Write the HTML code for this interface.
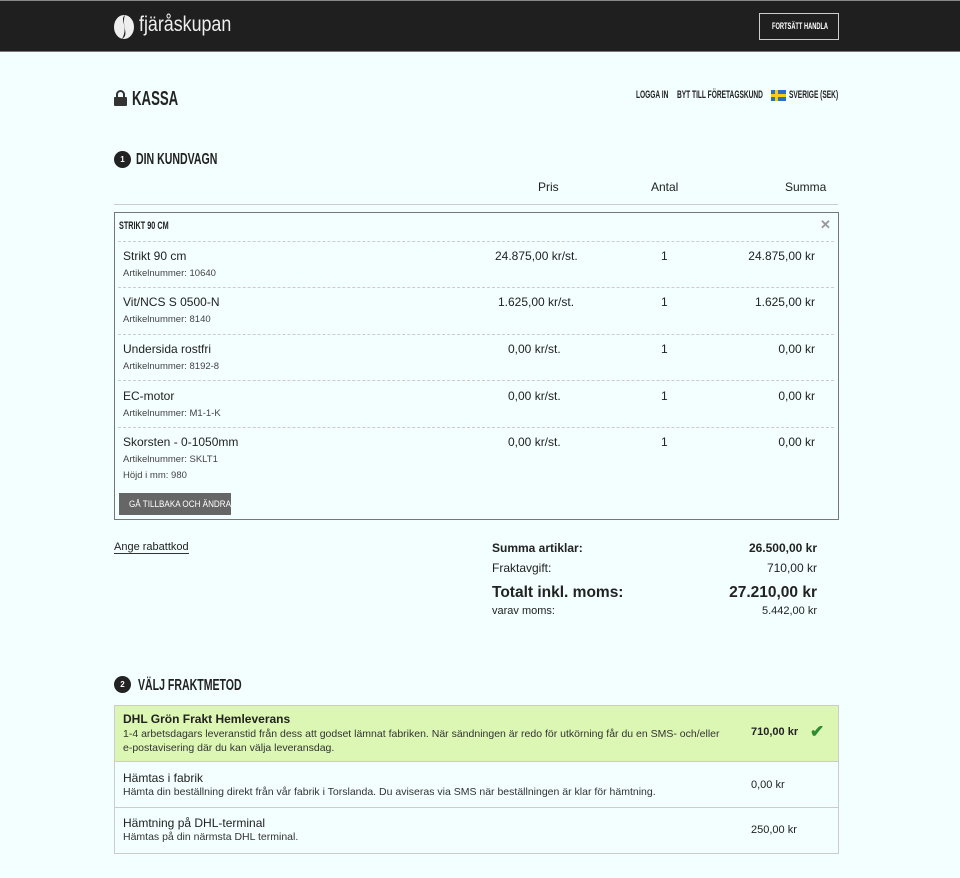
<!DOCTYPE html>
<html><head><meta charset="utf-8"><style>
*{box-sizing:border-box;margin:0;padding:0}
body{width:960px;height:878px;background:#f3fefe;font-family:"Liberation Sans",sans-serif;color:#222;position:relative;overflow:hidden;font-size:11px}
.a{position:absolute}
.hd{left:0;top:0;width:960px;height:52px;background:#1e1f1e;border-top:1px solid #888;border-bottom:1px solid #777}
.cond{font-weight:bold;text-transform:uppercase;white-space:nowrap;transform:scaleX(0.66);transform-origin:left top}
.r{text-align:right}
.sm{font-size:9.5px;color:#444}
.dash{border-top:1px dashed #ccc}
</style></head><body>
<div class="a hd">
 <svg class="a" style="left:113px;top:13px" width="22" height="26" viewBox="0 0 22 26"><ellipse cx="11" cy="13" rx="10" ry="12" fill="#eee"/><path d="M12 1 C6 6 16 12 9 25 C17 20 8 12 12 1Z" fill="#1e1f1e"/></svg>
 <div class="a" style="left:139px;top:12px;font-size:21px;color:#eee;white-space:nowrap;transform:scaleX(0.85);transform-origin:left top">fjäråskupan</div>
 <div class="a" style="left:759px;top:12px;width:80px;height:27px;border:1px solid #ccc"></div>
 <div class="a cond" style="left:772px;top:20px;font-size:9.5px;color:#fff;transform:scaleX(0.6)">Fortsätt handla</div>
</div>
<svg class="a" style="left:114px;top:90px" width="13" height="16" viewBox="0 0 13 16"><path d="M3 7V4.5a3.5 3.5 0 0 1 7 0V7" stroke="#333" stroke-width="2" fill="none"/><rect x="0" y="7" width="13" height="9" rx="1" fill="#333"/></svg>
<div class="a cond" style="left:132px;top:88px;font-size:20px">Kassa</div>
<div class="a cond" style="left:636px;top:89px;font-size:11px;transform:scaleX(0.6)">Logga in</div>
<div class="a cond" style="left:677px;top:89px;font-size:11px;transform:scaleX(0.6)">Byt till företagskund</div>
<svg class="a" style="left:771px;top:90px" width="15" height="11"><rect width="15" height="11" fill="#2a6fc0"/><rect x="4" width="3" height="11" fill="#f5cc1a"/><rect y="4" width="15" height="3" fill="#f5cc1a"/></svg>
<div class="a cond" style="left:789px;top:89px;font-size:11px;transform:scaleX(0.6)">Sverige (SEK)</div>

<div class="a" style="left:114px;top:151px;width:17px;height:17px;border-radius:50%;background:#222;color:#fff;font-size:8px;text-align:center;line-height:17px;font-weight:bold">1</div>
<div class="a cond" style="left:136px;top:151px;font-size:16px">Din kundvagn</div>
<div class="a" style="left:538px;top:180px;font-size:12px">Pris</div>
<div class="a" style="left:651px;top:180px;font-size:12px">Antal</div>
<div class="a" style="left:785px;top:180px;font-size:12px">Summa</div>
<div class="a" style="left:114px;top:204px;width:724px;border-top:1px solid #ccc"></div>
<div class="a" style="left:114px;top:212px;width:725px;height:308px;border:1px solid #777"></div>
<div class="a cond" style="left:119px;top:220px;font-size:11px">Strikt 90 cm</div>
<div class="a" style="left:820px;top:217px;font-size:13px;color:#999;font-weight:bold">✕</div>

<div class="a dash" style="left:118px;top:241px;width:716px"></div>
<div class="a" style="left:123px;top:249px;font-size:12px">Strikt 90 cm</div>
<div class="a sm" style="left:123px;top:268px">Artikelnummer: 10640</div>
<div class="a" style="left:495px;top:249px;font-size:12px">24.875,00 kr/st.</div>
<div class="a" style="left:661px;top:249px;font-size:12px">1</div>
<div class="a r" style="left:700px;width:115px;top:249px;font-size:12px">24.875,00 kr</div>

<div class="a dash" style="left:118px;top:287px;width:716px"></div>
<div class="a" style="left:123px;top:295px;font-size:12px">Vit/NCS S 0500-N</div>
<div class="a sm" style="left:123px;top:314px">Artikelnummer: 8140</div>
<div class="a" style="left:498px;top:295px;font-size:12px">1.625,00 kr/st.</div>
<div class="a" style="left:661px;top:295px;font-size:12px">1</div>
<div class="a r" style="left:700px;width:115px;top:295px;font-size:12px">1.625,00 kr</div>

<div class="a dash" style="left:118px;top:334px;width:716px"></div>
<div class="a" style="left:123px;top:342px;font-size:12px">Undersida rostfri</div>
<div class="a sm" style="left:123px;top:361px">Artikelnummer: 8192-8</div>
<div class="a" style="left:508px;top:342px;font-size:12px">0,00 kr/st.</div>
<div class="a" style="left:661px;top:342px;font-size:12px">1</div>
<div class="a r" style="left:700px;width:115px;top:342px;font-size:12px">0,00 kr</div>

<div class="a dash" style="left:118px;top:380px;width:716px"></div>
<div class="a" style="left:123px;top:389px;font-size:12px">EC-motor</div>
<div class="a sm" style="left:123px;top:408px">Artikelnummer: M1-1-K</div>
<div class="a" style="left:508px;top:389px;font-size:12px">0,00 kr/st.</div>
<div class="a" style="left:661px;top:389px;font-size:12px">1</div>
<div class="a r" style="left:700px;width:115px;top:389px;font-size:12px">0,00 kr</div>

<div class="a dash" style="left:118px;top:427px;width:716px"></div>
<div class="a" style="left:123px;top:435px;font-size:12px">Skorsten - 0-1050mm</div>
<div class="a sm" style="left:123px;top:454px">Artikelnummer: SKLT1</div>
<div class="a sm" style="left:123px;top:470px">Höjd i mm: 980</div>
<div class="a" style="left:508px;top:435px;font-size:12px">0,00 kr/st.</div>
<div class="a" style="left:661px;top:435px;font-size:12px">1</div>
<div class="a r" style="left:700px;width:115px;top:435px;font-size:12px">0,00 kr</div>
<div class="a" style="left:119px;top:493px;width:112px;height:22px;background:#666"></div>
<div class="a" style="left:129px;top:499px;font-size:9px;color:#fff;white-space:nowrap;transform:scaleX(0.9);transform-origin:left top">GÅ TILLBAKA OCH ÄNDRA</div>

<div class="a" style="left:114px;top:541px;font-size:11px;border-bottom:1px solid #333">Ange rabattkod</div>
<div class="a" style="left:492px;top:541px;font-size:12px;font-weight:bold">Summa artiklar:</div>
<div class="a r" style="left:700px;width:117px;top:541px;font-size:12px;font-weight:bold">26.500,00 kr</div>
<div class="a" style="left:492px;top:561px;font-size:12px">Fraktavgift:</div>
<div class="a r" style="left:700px;width:117px;top:561px;font-size:12px">710,00 kr</div>
<div class="a" style="left:492px;top:584px;font-size:15.5px;font-weight:bold">Totalt inkl. moms:</div>
<div class="a r" style="left:680px;width:137px;top:584px;font-size:15.5px;font-weight:bold">27.210,00 kr</div>
<div class="a" style="left:492px;top:605px;font-size:11px">varav moms:</div>
<div class="a r" style="left:700px;width:117px;top:605px;font-size:11px">5.442,00 kr</div>

<div class="a" style="left:114px;top:676px;width:17px;height:17px;border-radius:50%;background:#222;color:#fff;font-size:8px;text-align:center;line-height:17px;font-weight:bold">2</div>
<div class="a cond" style="left:138px;top:677px;font-size:16px">Välj fraktmetod</div>

<div class="a" style="left:114px;top:705px;width:725px;height:149px;border:1px solid #ccc"></div>
<div class="a" style="left:115px;top:706px;width:723px;height:56px;background:#dcf6b4;border-bottom:1px solid #ccc"></div>
<div class="a" style="left:123px;top:712px;font-size:12px;font-weight:bold">DHL Grön Frakt Hemleverans</div>
<div class="a" style="left:123px;top:727px;font-size:10.5px;line-height:14px;width:600px;color:#333">1-4 arbetsdagars leveranstid från dess att godset lämnat fabriken. När sändningen är redo för utkörning får du en SMS- och/eller e-postavisering där du kan välja leveransdag.</div>
<div class="a" style="left:751px;top:726px;font-size:11px;font-weight:bold">710,00 kr</div>
<div class="a" style="left:810px;top:722px;font-size:17px;color:#2e8b2e;font-weight:bold">✔</div>
<div class="a" style="left:115px;top:807px;width:723px;border-top:1px solid #ccc"></div>
<div class="a" style="left:123px;top:771px;font-size:12px">Hämtas i fabrik</div>
<div class="a" style="left:123px;top:786px;font-size:10.5px;color:#333">Hämta din beställning direkt från vår fabrik i Torslanda. Du aviseras via SMS när beställningen är klar för hämtning.</div>
<div class="a" style="left:751px;top:779px;font-size:11px">0,00 kr</div>
<div class="a" style="left:123px;top:816px;font-size:12px">Hämtning på DHL-terminal</div>
<div class="a" style="left:123px;top:831px;font-size:10.5px;color:#333">Hämtas på din närmsta DHL terminal.</div>
<div class="a" style="left:751px;top:824px;font-size:11px">250,00 kr</div>
</body></html>
